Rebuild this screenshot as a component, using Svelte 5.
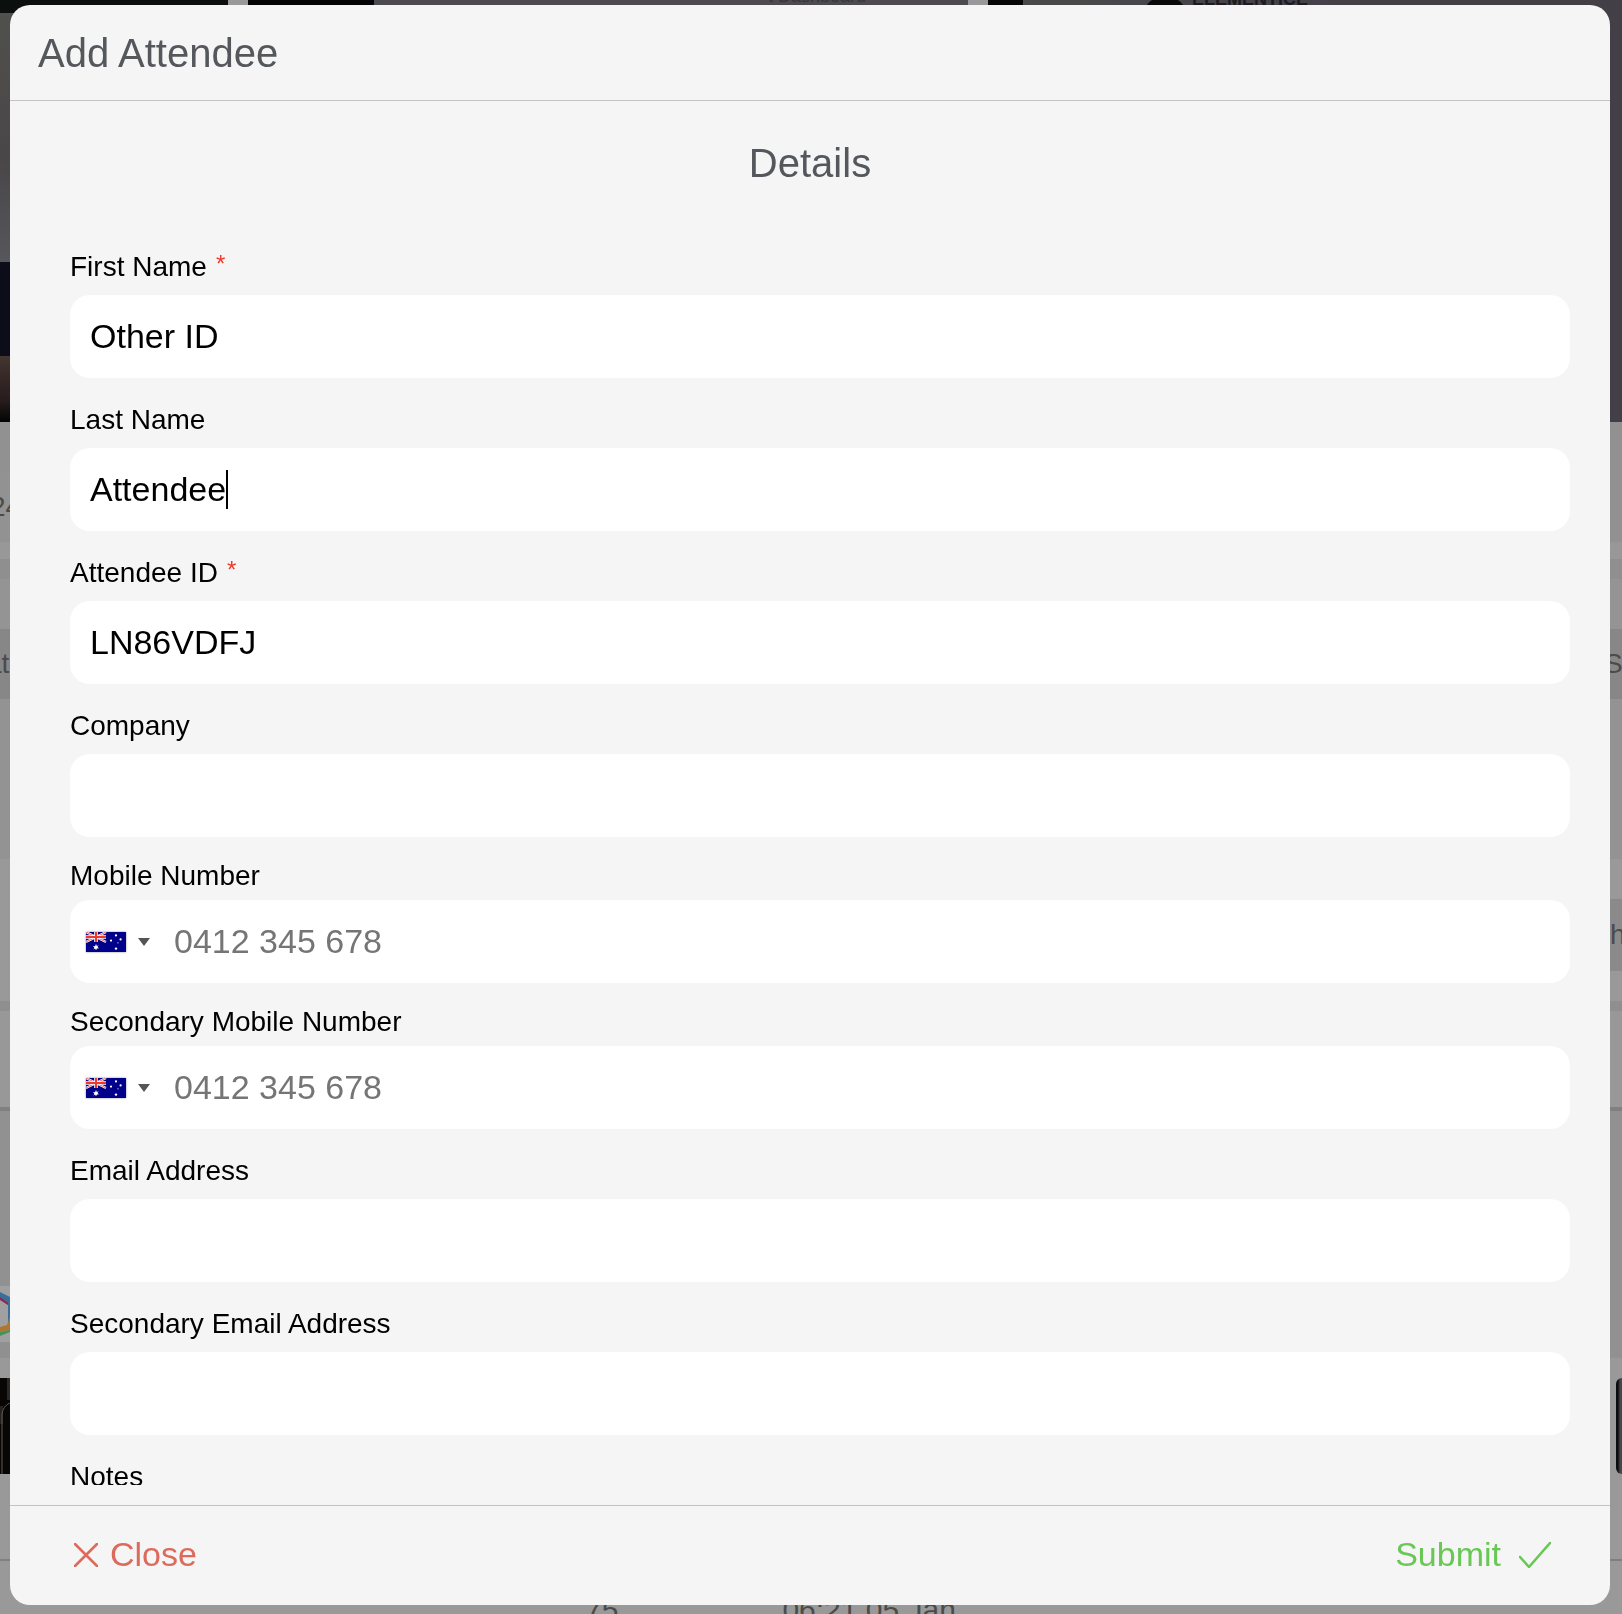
<script lang="ts">
  type Field = {
    id: string
    label: string
    value?: string
    required?: boolean
    type?: 'text' | 'tel' | 'email'
  }

  type Row = { height: number; shade: string; text?: string; indent?: number }

  let fields: Field[] = $state([
    { id: 'first-name', label: 'First Name', value: 'Other ID', required: true },
    { id: 'last-name', label: 'Last Name', value: 'Attendee' },
    { id: 'attendee-id', label: 'Attendee ID', value: 'LN86VDFJ', required: true },
    { id: 'company', label: 'Company', value: '' },
    { id: 'mobile', label: 'Mobile Number', value: '', type: 'tel' },
    { id: 'mobile-2', label: 'Secondary Mobile Number', value: '', type: 'tel' },
    { id: 'email', label: 'Email Address', value: '', type: 'email' },
    { id: 'email-2', label: 'Secondary Email Address', value: '', type: 'email' },
    { id: 'notes', label: 'Notes', value: '' },
  ])

  let showCaret = $state(true)

  // Dimmed rows of the page behind the dialog
  const leftRows: Row[] = [
    { height: 49, shade: '#919191' },
    { height: 71, shade: '#929292', text: '24', indent: -10 },
    { height: 17, shade: '#989898' },
    { height: 20, shade: '#8f8f8f' },
    { height: 50, shade: '#949494' },
    { height: 70, shade: '#878787', text: 'at', indent: -14 },
    { height: 160, shade: '#939393' },
    { height: 142, shade: '#999999' },
    { height: 10, shade: '#8f8f8f' },
    { height: 96, shade: '#989898' },
    { height: 4, shade: '#808080' },
    { height: 175, shade: '#919191' },
  ]
  const rightRows: Row[] = [
    { height: 120, shade: '#919191' },
    { height: 17, shade: '#989898' },
    { height: 20, shade: '#8f8f8f' },
    { height: 50, shade: '#949494' },
    { height: 70, shade: '#878787', text: 'St', indent: 14 },
    { height: 160, shade: '#939393' },
    { height: 40, shade: '#999999' },
    { height: 72, shade: '#8a8a8a', text: 'h', indent: 20 },
    { height: 30, shade: '#999999' },
    { height: 10, shade: '#8f8f8f' },
    { height: 96, shade: '#989898' },
    { height: 4, shade: '#808080' },
    { height: 247, shade: '#919191' },
  ]
</script>

<div class="page" aria-hidden="true">
  <div class="photos">
    <div class="photo photo-left"><span class="wall"></span><span class="suit"></span><span class="hand"></span></div>
    <div class="photo photo-mid"><span class="screen-text">t Dashboard</span></div>
    <div class="photo photo-right">
      <span class="emblem"></span>
      <span class="sponsor">ELEMENTICE</span>
    </div>
  </div>
  <div class="rows">
    <div class="strip">
      {#each leftRows as row}
        <div class="band" style:height="{row.height}px" style:background={row.shade}>
          {#if row.text}<span style:margin-left="{row.indent}px">{row.text}</span>{/if}
        </div>
      {/each}
      <svg class="hexagon" viewBox="0 0 10 56">
        <rect width="10" height="56" fill="#a0a0a0" />
        <path d="M0 6L10 11V34L8 38V19L0 12Z" fill="#3a6f9a" />
        <path d="M0 11L8 17V19L0 14Z" fill="#96224d" />
        <path d="M0 41L7 39L10 31V44L0 46Z" fill="#ad7730" />
        <path d="M0 46L10 44V46L0 50Z" fill="#42945d" />
      </svg>
      <div class="band" style:height="16px" style:background="#909090"></div>
    </div>
    <div class="strip">
      {#each rightRows as row}
        <div class="band" style:height="{row.height}px" style:background={row.shade}>
          {#if row.text}<span style:margin-left="{row.indent}px">{row.text}</span>{/if}
        </div>
      {/each}
    </div>
  </div>
  <div class="thumbs">
    <svg class="thumb" viewBox="0 0 10 96">
      <rect width="10" height="96" fill="#070605" />
      <path d="M7 0H10V22H7Z" fill="#2c2924" />
      <path d="M0 28H3V46H0Z" fill="#24211e" />
      <path d="M2 96V36Q3 28 10 25" fill="none" stroke="#5c5a57" />
    </svg>
    <span class="thumb thumb-round"></span>
  </div>
  <div class="last-row">
    <span>75</span>
    <span>06:21 05 Jan</span>
  </div>
</div>

<div class="overlay">
  <form class="modal" aria-labelledby="modal-title" onsubmit={(e) => e.preventDefault()}>
    <header>
      <h1 id="modal-title">Add Attendee</h1>
    </header>

    <div class="body">
      <h2>Details</h2>

      {#each fields as field (field.id)}
        <div class="field" class:phone={field.type === 'tel'}>
          <label for={field.id}>{field.label}{#if field.required}<span class="required">*</span>{/if}</label>
          <div class="control">
            {#if field.type === 'tel'}
              <button type="button" class="country" aria-label="Australia">
                <svg class="flag" viewBox="0 0 40 20">
                  <rect width="40" height="20" fill="#00008b" />
                  <path d="M0 0L20 10M20 0L0 10" stroke="#fff" stroke-width="2.2" />
                  <path d="M0 0L20 10M20 0L0 10" stroke="#f0392b" stroke-width="0.8" />
                  <path d="M10 0V10M0 5H20" stroke="#fff" stroke-width="3.6" />
                  <path d="M10 0V10M0 5H20" stroke="#f0392b" stroke-width="2" />
                  <circle cx="10" cy="15.2" r="1.8" fill="#fff" />
                  <path d="M10 12.4V18M7.3 14.4L12.7 16.2M7.7 17L12.3 13.6" stroke="#fff" stroke-width="0.8" />
                  <g fill="#fff">
                    <circle cx="30" cy="3.4" r="1.1" />
                    <circle cx="25" cy="8.6" r="1.1" />
                    <circle cx="34.6" cy="7.4" r="1.1" />
                    <circle cx="30" cy="16.6" r="1.2" />
                    <circle cx="32" cy="10.8" r="0.6" />
                  </g>
                </svg>
                <svg class="arrow" viewBox="0 0 12 8"><path d="M0 0H12L6 8Z" fill="#555" /></svg>
              </button>
            {/if}
            <input
              id={field.id}
              type={field.type ?? 'text'}
              placeholder={field.type === 'tel' ? '0412 345 678' : undefined}
              required={field.required}
              bind:value={field.value}
              onfocus={() => (showCaret = false)}
            />
            {#if field.id === 'last-name' && showCaret}
              <span class="caret-line" aria-hidden="true"><span class="ghost">{field.value}</span></span>
            {/if}
          </div>
        </div>
      {/each}
    </div>

    <footer>
      <button type="button" class="close">
        <svg width="24" height="24" viewBox="0 0 24 24"><path d="M1 1L23 23M23 1L1 23" /></svg>
        Close
      </button>
      <button type="submit" class="submit">
        Submit
        <svg width="32" height="26" viewBox="0 0 32 26"><path d="M1 15L10 25L31 1" /></svg>
      </button>
    </footer>
  </form>
</div>

<style>
  :global(body) {
    margin: 0;
    background: #999;
    overflow: hidden;
  }

  .page,
  .overlay {
    font-family: 'Liberation Sans', Arial, sans-serif;
  }

  .page {
    display: flex;
    flex-direction: column;
    height: 100vh;
    overflow: hidden;
    color: #4b4b4b;
    font-size: 30px;
  }

  .photos {
    display: flex;
    flex: none;
    gap: 20px;
    height: 422px;
  }
  .photo { overflow: hidden; }
  .photo-left {
    display: flex;
    flex-direction: column;
    width: 228px;
    background: #0b100f;
  }
  .wall {
    height: 249px;
    margin-top: 13px;
    background: linear-gradient(#50504d, #494748 60%, #56565c);
  }
  .suit {
    height: 94px;
    background: #0c0d18;
  }
  .hand {
    height: 66px;
    background: linear-gradient(#443530, #241b1b 70%, #030303);
  }
  .photo-mid {
    width: 720px;
    background: linear-gradient(90deg, #050404 126px, #4d4b50 126px);
  }
  .photo-right {
    display: flex;
    flex: 1;
    align-items: flex-start;
    gap: 4px;
    background: linear-gradient(90deg, #070707 35px, #4a4a4a 35px, #433f47 60%);
  }
  .screen-text {
    display: block;
    margin: -14px 0 0 520px;
    color: #38353c;
    font-size: 18px;
    line-height: 20px;
  }
  .emblem {
    width: 46px;
    height: 46px;
    margin: -4px 0 0 154px;
    border-radius: 23px;
    background: #0a0a0b;
  }
  .sponsor {
    margin-top: -10px;
    color: #1d1b20;
    font-size: 18px;
    line-height: 18px;
    font-weight: bold;
  }

  .rows {
    display: flex;
    flex: none;
    justify-content: space-between;
    height: 956px;
  }
  .strip {
    display: flex;
    flex-direction: column;
    width: 32px;
  }
  .band {
    display: flex;
    flex: none;
    align-items: center;
    overflow: hidden;
    font-size: 28px;
  }
  .hexagon {
    width: 10px;
    height: 56px;
  }

  .thumbs {
    display: flex;
    flex: none;
    justify-content: space-between;
    height: 96px;
  }
  .thumb { width: 10px; }
  .thumb-round {
    width: 6px;
    border-radius: 8px 0 0 8px;
    background: linear-gradient(90deg, #0b0e0e 2px, #47464a 4px);
  }

  .last-row {
    display: flex;
    gap: 164px;
    margin-top: 85px;
    padding: 33px 0 0 585px;
    border-top: 2px solid #808080;
    line-height: 32px;
  }

  .overlay {
    position: fixed;
    inset: 0;
    display: flex;
    padding: 5px 12px 9px 10px;
  }

  .modal {
    display: flex;
    flex: 1;
    flex-direction: column;
    overflow: hidden;
    border-radius: 20px;
    background: #f5f5f5;
  }

  header {
    padding: 24px 28px 23px;
    border-bottom: 1px solid #c3c3c3;
  }
  h1,
  h2 {
    margin: 0;
    color: #54585d;
    font-size: 40px;
    line-height: 48px;
    font-weight: normal;
  }
  h2 {
    margin: 0 0 38px -20px;
    text-align: center;
  }

  .body {
    flex: 1;
    min-height: 0;
    margin-bottom: 20px;
    padding: 38px 40px 0 60px;
    overflow: hidden;
  }

  .field { padding-top: 26px; }
  .field label {
    display: block;
    padding-bottom: 12px;
    color: #000;
    font-size: 28px;
    line-height: 32px;
  }
  .required {
    margin-left: 9px;
    color: #f0392b;
    font-size: 24px;
    line-height: 1;
    vertical-align: 4px;
  }

  .control {
    position: relative;
    display: flex;
    height: 83px;
    border-radius: 20px;
    background: #fff;
  }
  input {
    flex: 1;
    min-width: 0;
    padding: 0 20px;
    border: 0;
    border-radius: 20px;
    outline: none;
    background: none;
    color: #000;
    font-family: inherit;
    font-size: 34px;
  }
  input::placeholder {
    color: #757575;
    opacity: 1;
  }

  .caret-line {
    position: absolute;
    top: 22px;
    left: 20px;
    height: 39px;
    border-right: 2px solid #000;
    pointer-events: none;
  }
  .ghost {
    visibility: hidden;
    font-size: 34px;
  }

  .phone { padding-top: 23px; }
  .phone label { padding-bottom: 8px; }
  .country {
    display: flex;
    align-items: center;
    gap: 12px;
    padding: 0 0 0 16px;
    border: 0;
    background: none;
  }
  .flag {
    width: 40px;
    height: 20px;
    box-shadow: 0 0 2px #888;
  }
  .arrow {
    width: 12px;
    height: 8px;
  }
  .phone input { padding-left: 24px; }

  footer {
    display: flex;
    align-items: center;
    justify-content: space-between;
    height: 97px;
    padding: 0 59px 2px 64px;
    border-top: 1px solid #c3c3c3;
  }
  footer button {
    display: flex;
    align-items: center;
    padding: 0;
    border: 0;
    background: none;
    font-family: inherit;
    font-size: 34px;
    cursor: pointer;
  }
  footer svg {
    fill: none;
    stroke: currentColor;
    stroke-width: 2.6;
    stroke-linecap: round;
    stroke-linejoin: round;
  }
  .close {
    gap: 12px;
    color: #dc6b5c;
  }
  .submit {
    gap: 18px;
    color: #69c756;
  }
</style>
